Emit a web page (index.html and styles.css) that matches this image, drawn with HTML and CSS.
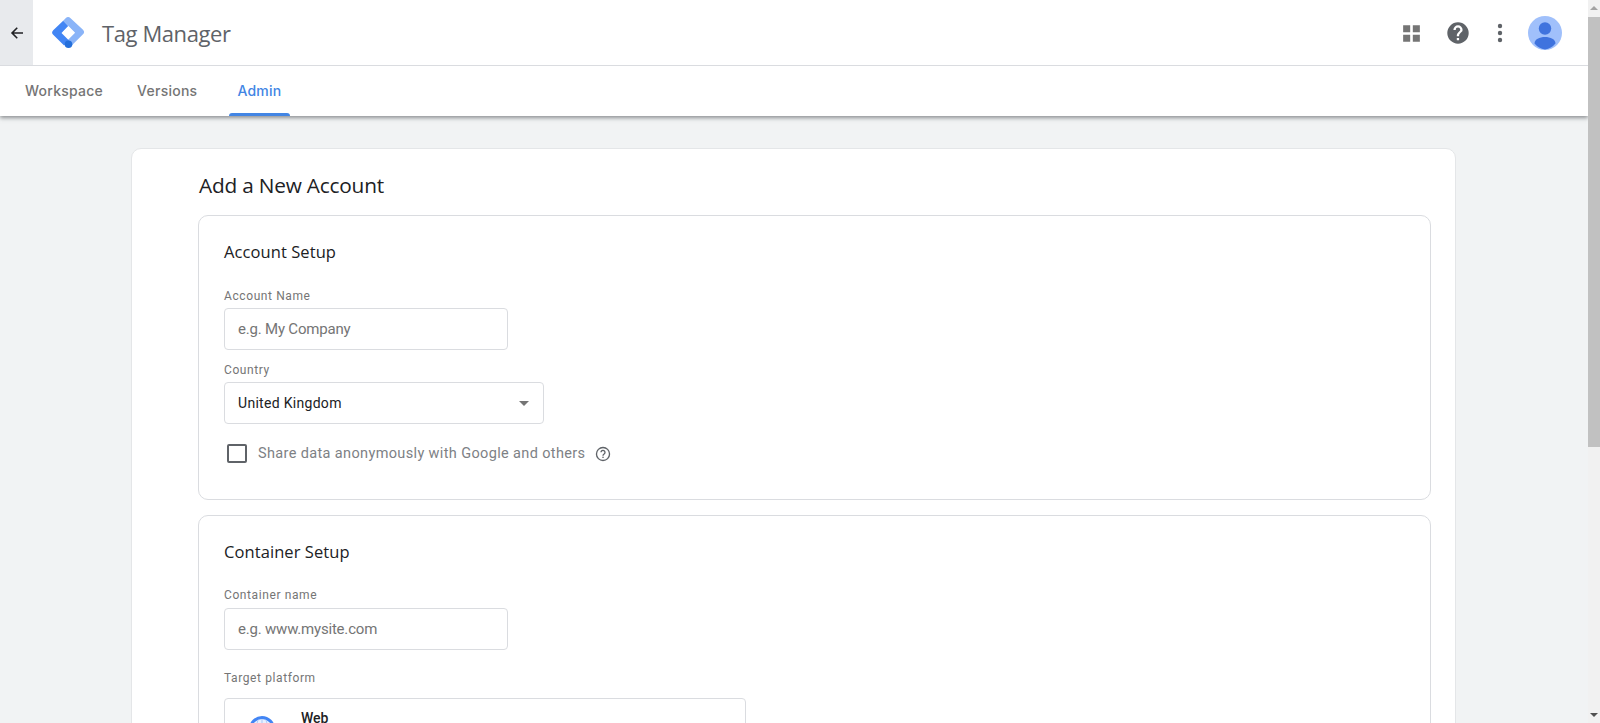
FILE: index.html
```html
<!DOCTYPE html>
<html lang="en">
<head>
<meta charset="utf-8">
<title>Tag Manager</title>
<link rel="stylesheet" href="styles.css">
</head>
<body>
<div class="app">
  <div class="page">
    <header class="topbar">
      <div class="brandbar">
        <button class="back" aria-label="Back">
          <svg width="16" height="16" viewBox="0 0 16 16"><path d="M14 7.2H4.9l3.9-3.9L7.7 2.2 1.9 8l5.8 5.8 1.1-1.1-3.9-3.9H14z" fill="#202124"/></svg>
        </button>
        <svg class="logo" width="34" height="34" viewBox="0 0 34 34">
          <path d="M19.6 2.3a3.6 3.6 0 0 0-5 0l-2.4 2.4 11.9 12-11 11 2.2 2.3 0 .1a3.6 3.6 0 0 0 4.9 0L32 18.300a3.200 3.200 0 0 0 0-4.500z" fill="#8ab4f8"/>
          <path d="M12.200 4.700 2.200 14.200a3.200 3.200 0 0 0 0 4.500l10.900 10.900 4.900-5-7.500-7.500 6.700-7.200z" fill="#4285f4"/>
          <circle cx="17.500" cy="28.300" r="3.800" fill="#246fdb"/>
          <rect x="13.200" y="12.200" width="8.400" height="8.400" rx="1" transform="rotate(45 17.400 16.400)" fill="#fff"/>
        </svg>
        <span class="product">Tag Manager</span>
        <div class="actions">
          <svg width="24" height="24" viewBox="0 0 24 24"><path d="M3 3h8v8H3zM14 3h8v8h-8zM3 14h8v8H3zM14 14h8v8h-8z" fill="#757575" transform="translate(1.500 1.500) scale(.88)"/></svg>
          <svg width="24" height="24" viewBox="0 0 24 24"><path d="M12 1.300a10.700 10.700 0 1 0 0 21.400 10.700 10.700 0 0 0 0-21.400zm1.100 18h-2.300V17h2.300zm2.400-8.300-1 1.100c-.9.900-1.400 1.500-1.400 3.100h-2.300v-.6c0-1.200.5-2.300 1.400-3.200l1.400-1.400c.4-.4.700-1 .7-1.600A2.300 2.300 0 0 0 12 6.600a2.300 2.300 0 0 0-2.300 2.300H7.400a4.600 4.600 0 0 1 9.200 0c0 .8-.4 1.500-1.100 2.100z" fill="#5f6368"/></svg>
          <svg class="dots" width="6" height="20" viewBox="0 0 6 20"><circle cx="3" cy="3" r="2.200" fill="#5f6368"/><circle cx="3" cy="10" r="2.200" fill="#5f6368"/><circle cx="3" cy="17" r="2.200" fill="#5f6368"/></svg>
          <svg class="avatar" width="34" height="34" viewBox="0 0 34 34"><circle cx="17" cy="17" r="17" fill="#a0c0fb"/><circle cx="17" cy="12.500" r="6.200" fill="#3f73de"/><path d="M6.500 27.500c0-4.300 5-6.500 10.500-6.500s10.500 2.200 10.500 6.500A16.900 16.900 0 0 1 17 33.500 16.900 16.900 0 0 1 6.500 27.500z" fill="#3f73de"/></svg>
        </div>
      </div>
      <nav class="tabs">
        <a class="tab">Workspace</a>
        <a class="tab">Versions</a>
        <a class="tab active">Admin</a>
      </nav>
    </header>
    <main class="content">
      <section class="card">
        <h1 class="title">Add a New Account</h1>
        <div class="panel account">
          <h2 class="panel-title">Account Setup</h2>
          <label class="label">Account Name</label>
          <div class="field placeholder">e.g. My Company</div>
          <label class="label second">Country</label>
          <div class="field select">
            <span>United Kingdom</span>
            <svg width="10" height="5" viewBox="0 0 10 5"><path d="M0 0h10L5 5z" fill="#757575"/></svg>
          </div>
          <div class="share">
            <span class="checkbox"></span>
            <span class="share-text">Share data anonymously with Google and others</span>
            <svg width="16" height="16" viewBox="0 0 24 24"><circle cx="12" cy="12" r="9.800" fill="none" stroke="#5f6368" stroke-width="2"/><path d="M9 9.500a3 3 0 1 1 4.700 2.500c-1 .7-1.700 1.200-1.700 2.500" fill="none" stroke="#5f6368" stroke-width="2"/><rect x="11" y="16" width="2" height="2" fill="#5f6368"/></svg>
          </div>
        </div>
        <div class="panel container-panel">
          <h2 class="panel-title">Container Setup</h2>
          <label class="label">Container name</label>
          <div class="field placeholder">e.g. www.mysite.com</div>
          <label class="label platform-label">Target platform</label>
          <div class="platform">
            <svg class="globe" width="26" height="26" viewBox="0 0 26 26"><circle cx="13" cy="13" r="11.500" fill="#e8f0fe" stroke="#4285f4" stroke-width="3"/><path d="M13 3v20M9 4c-2 6-2 12 0 18M17 4c2 6 2 12 0 18" fill="none" stroke="#a8c7fa" stroke-width="1"/></svg>
            <div class="platform-name">Web</div>
          </div>
        </div>
      </section>
    </main>
  </div>
  <aside class="scrollbar">
    <span class="arrow up"></span>
    <span class="thumb"></span>
    <span class="track"></span>
    <span class="arrow down"></span>
  </aside>
</div>
</body>
</html>
```
FILE: styles.css
```css
* { box-sizing: border-box; }
html, body { margin: 0; height: 100%; overflow: hidden; }
body { font-family: Roboto, "Noto Sans", sans-serif; background: #f1f3f4; color: #202124; }
.app { display: flex; height: 723px; }
.page { flex: 1; min-width: 0; display: flex; flex-direction: column; height: 723px; overflow: hidden; }
.topbar { background: #fff; box-shadow: 0 2px 4px rgba(60,64,67,.55); position: relative; z-index: 1; flex: none; }
.brandbar { height: 66px; display: flex; align-items: center; border-bottom: 1px solid #dadce0; padding-right: 26px; }
.back { width: 33px; height: 65px; border: 0; padding: 0; background: #e8eaed; display: flex; align-items: center; justify-content: center; }
.logo { margin-left: 18px; flex: none; }
.product { margin-left: 17px; font-family: "Open Sans", sans-serif; font-size: 22px; letter-spacing: -.4px; color: #5f6368; }
.actions { margin-left: auto; display: flex; align-items: center; }
.actions svg:nth-child(1) { margin-right: 23px; }
.actions svg:nth-child(2) { margin-right: 27px; }
.dots { margin-right: 25px; }
.tabs { height: 50px; display: flex; padding-left: 17px; }
.tab { position: relative; padding: 0 8px; margin-right: 18px; height: 50px; line-height: 49px; font-family: Inter, Roboto, sans-serif; font-size: 14px; font-weight: 500; letter-spacing: .25px; color: #757575; }
.tab.active { color: #4285e4; margin-left: 6px; }
.tab.active::after { content: ""; position: absolute; left: 0; right: 0; bottom: 0; height: 3px; background: #4285e4; border-radius: 3px 3px 0 0; }
.content { padding: 32px 132px 0 131px; flex: 1; }
.card { background: #fff; border: 1px solid #e4e6e8; border-radius: 10px 10px 0 0; padding: 20px 24px 0 66px; height: 600px; }
.title { margin: 0 0 14px 1px; font-family: "Open Sans", sans-serif; font-size: 20.8px; line-height: 32px; font-weight: 400; letter-spacing: -.2px; }
.panel { border: 1px solid #dadce0; border-radius: 10px; padding: 24px 25px 0; }
.account { height: 285px; margin-bottom: 15px; }
.panel-title { margin: 0 0 24px; font-family: "Open Sans", sans-serif; font-size: 16.5px; line-height: 24px; font-weight: 400; letter-spacing: .08px; }
.container-panel .panel-title { margin-bottom: 23px; }
.container-panel .label:first-of-type { margin-bottom: 5px; }
.label { display: block; font-size: 12px; line-height: 16px; letter-spacing: .6px; color: #757575; margin-bottom: 4px; }
.label.second { margin-top: 12px; }
.field { width: 284px; height: 42px; border: 1px solid #dadce0; border-radius: 4px; padding: 0 13px; display: flex; align-items: center; font-size: 14px; letter-spacing: .3px; color: #757575; }
.placeholder { font-size: 15px; letter-spacing: -.2px; }
.select { width: 320px; justify-content: space-between; padding-right: 14px; color: #202124; letter-spacing: .3px; }
.share { display: flex; align-items: center; margin: 20px 0 0 3px; }
.checkbox { width: 20px; height: 19px; border: 2px solid #5f6368; border-radius: 2px; flex: none; }
.share-text { margin: 0 10px 0 11px; font-size: 14.5px; letter-spacing: .36px; color: #7d8185; }
.platform-label { margin: 20px 0 12px; }
.platform { width: 522px; height: 80px; border: 1px solid #dadce0; border-radius: 4px; padding: 12px 0 0 76px; position: relative; }
.globe { position: absolute; left: 24px; top: 17px; }
.platform-name { font-size: 14px; font-weight: 500; line-height: 14px; color: #202124; }
.scrollbar { width: 12px; flex: none; background: #f1f1f1; display: flex; flex-direction: column; align-items: center; }
.arrow { flex: none; height: 17px; width: 12px; position: relative; }
.arrow::after { content: ""; position: absolute; left: 2px; border-left: 4px solid transparent; border-right: 4px solid transparent; }
.arrow.up::after { top: 6px; border-bottom: 4px solid #a3a3a3; }
.arrow.down::after { bottom: 6px; border-top: 4px solid #505050; }
.thumb { flex: none; width: 12px; height: 430px; background: #c1c1c1; }
.track { flex: 1; }
```
